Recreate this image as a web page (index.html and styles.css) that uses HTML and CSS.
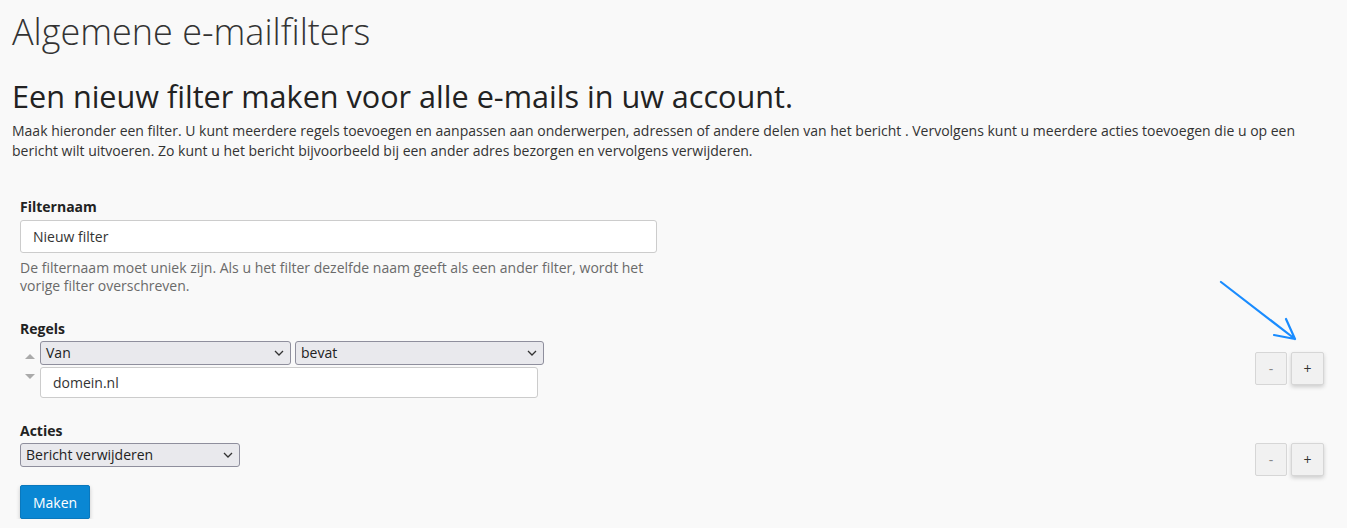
FILE: index.html
```html
<!DOCTYPE html>
<html lang="nl">
<head>
<meta charset="utf-8">
<title>Algemene e-mailfilters</title>
<link rel="stylesheet" href="styles.css">
</head>
<body>
<div class="page">
  <h1 class="title">Algemene e-mailfilters</h1>
  <h2 class="subtitle">Een nieuw filter maken voor alle e-mails in uw account.</h2>
  <p class="intro">Maak hieronder een filter. U kunt meerdere regels toevoegen en aanpassen aan onderwerpen, adressen of andere delen van het bericht . Vervolgens kunt u meerdere acties toevoegen die u op een bericht wilt uitvoeren. Zo kunt u het bericht bijvoorbeeld bij een ander adres bezorgen en vervolgens verwijderen.</p>

  <form class="form">
    <div class="field">
      <label class="label">Filternaam</label>
      <input class="text-input name-input" type="text" value="Nieuw filter">
      <p class="help">De filternaam moet uniek zijn. Als u het filter dezelfde naam geeft als een ander filter, wordt het vorige filter overschreven.</p>
    </div>

    <div class="field rules">
      <label class="label">Regels</label>
      <div class="row">
        <div class="rule">
          <div class="movers">
            <span class="mover up"></span>
            <span class="mover down"></span>
          </div>
          <div class="rule-body">
            <div class="selects">
              <div class="select sel-van"><span>Van</span><svg class="chev" viewBox="0 0 10 6"><path d="M1 1l4 4 4-4" fill="none" stroke="#333" stroke-width="1.3"/></svg></div>
              <div class="select sel-bevat"><span>bevat</span><svg class="chev" viewBox="0 0 10 6"><path d="M1 1l4 4 4-4" fill="none" stroke="#333" stroke-width="1.3"/></svg></div>
            </div>
            <input class="text-input value-input" type="text" value="domein.nl">
          </div>
        </div>
        <div class="pm">
          <button type="button" class="pm-btn minus">-</button>
          <button type="button" class="pm-btn plus">+</button>
          <svg class="arrow" width="90" height="70" viewBox="0 0 90 70">
            <path d="M2 2 L76 59 M67 39 L76 59 M55 55 L76 59" fill="none" stroke="#1a8cff" stroke-width="2.2" stroke-linecap="round"/>
          </svg>
        </div>
      </div>
    </div>

    <div class="field actions">
      <label class="label">Acties</label>
      <div class="row">
        <div class="select sel-action"><span>Bericht verwijderen</span><svg class="chev" viewBox="0 0 10 6"><path d="M1 1l4 4 4-4" fill="none" stroke="#333" stroke-width="1.3"/></svg></div>
        <div class="pm">
          <button type="button" class="pm-btn minus">-</button>
          <button type="button" class="pm-btn plus">+</button>
        </div>
      </div>
    </div>

    <button type="button" class="primary">Maken</button>
  </form>
</div>
</body>
</html>
```

FILE: styles.css
```css
* { box-sizing: border-box; }
html, body { margin: 0; padding: 0; }
body {
  background: #f9f9f9;
  font-family: "Open Sans", "Liberation Sans", sans-serif;
  color: #333;
  font-size: 14px;
  line-height: 20px;
}
.page { padding: 0 12px; }
.title {
  margin: 0;
  padding-top: 10px;
  font-size: 36px;
  font-weight: 300;
  line-height: 44px;
  color: #333;
}
.subtitle {
  margin: 24px 0 0;
  font-size: 30.6px;
  font-weight: 500;
  line-height: 36px;
  color: #222;
}
.intro {
  margin: 7px 0 0;
  font-size: 14px;
  line-height: 20px;
  max-width: 1320px;
}
.form { padding: 0 8px; margin-top: 36px; }
.field { margin-bottom: 0; }
.label {
  display: block;
  font-weight: 700;
  font-size: 14px;
  line-height: 20px;
  color: #222;
}
.text-input {
  display: block;
  font-family: inherit;
  font-size: 14px;
  color: #333;
  background: #fff;
  border: 1px solid #ccc;
  border-radius: 3px;
  padding: 0 12px;
}
.name-input { width: 637px; height: 33px; margin-top: 3px; }
.help {
  margin: 6px 0 0;
  width: 637px;
  color: #6a6a6a;
  line-height: 18px;
}
.rules { margin-top: 24px; }
.row { display: flex; justify-content: space-between; align-items: center; }
.rule { display: flex; align-items: flex-start; margin-top: 2px; }
.movers {
  width: 20px;
  display: flex;
  flex-direction: column;
  align-items: center;
  padding-top: 13px;
  gap: 15px;
}
.mover { width: 0; height: 0; border-left: 5px solid transparent; border-right: 5px solid transparent; }
.mover.up { border-bottom: 5px solid #aaa; }
.mover.down { border-top: 5px solid #aaa; }
.selects { display: flex; gap: 4px; }
.select {
  display: flex;
  align-items: center;
  justify-content: space-between;
  height: 24px;
  background: #e9e9ed;
  border: 1px solid #8f8f9d;
  border-radius: 3px;
  padding: 0 6px 0 5px;
  font-size: 14px;
  color: #222;
}
.chev { width: 10px; height: 6px; }
.sel-van { width: 251px; }
.sel-bevat { width: 249px; }
.value-input { width: 498px; height: 31px; margin-top: 2px; }
.pm { display: flex; gap: 4px; position: relative; margin-right: 3px; }
.pm-btn {
  width: 32px;
  height: 33px;
  background: #f1f1f1;
  border: 1px solid #d6d6d6;
  border-radius: 2px;
  font-family: inherit;
  font-size: 14px;
  color: #888;
  padding: 0;
}
.pm-btn.plus { width: 33px; color: #333; box-shadow: 0 2px 4px rgba(0,0,0,0.18); }
.arrow { position: absolute; left: -36px; top: -72px; }
.actions { margin-top: 23px; }
.actions .row { align-items: flex-start; margin-top: 2px; }
.sel-action { width: 220px; }
.primary {
  margin-top: 9px;
  display: block;
  width: 70px;
  height: 34px;
  background: #0a87d3;
  color: #fff;
  border: 1px solid #0a78bd;
  border-radius: 2px;
  font-family: inherit;
  font-size: 14px;
  box-shadow: 0 2px 4px rgba(0,0,0,0.2);
  padding: 0;
}
```
